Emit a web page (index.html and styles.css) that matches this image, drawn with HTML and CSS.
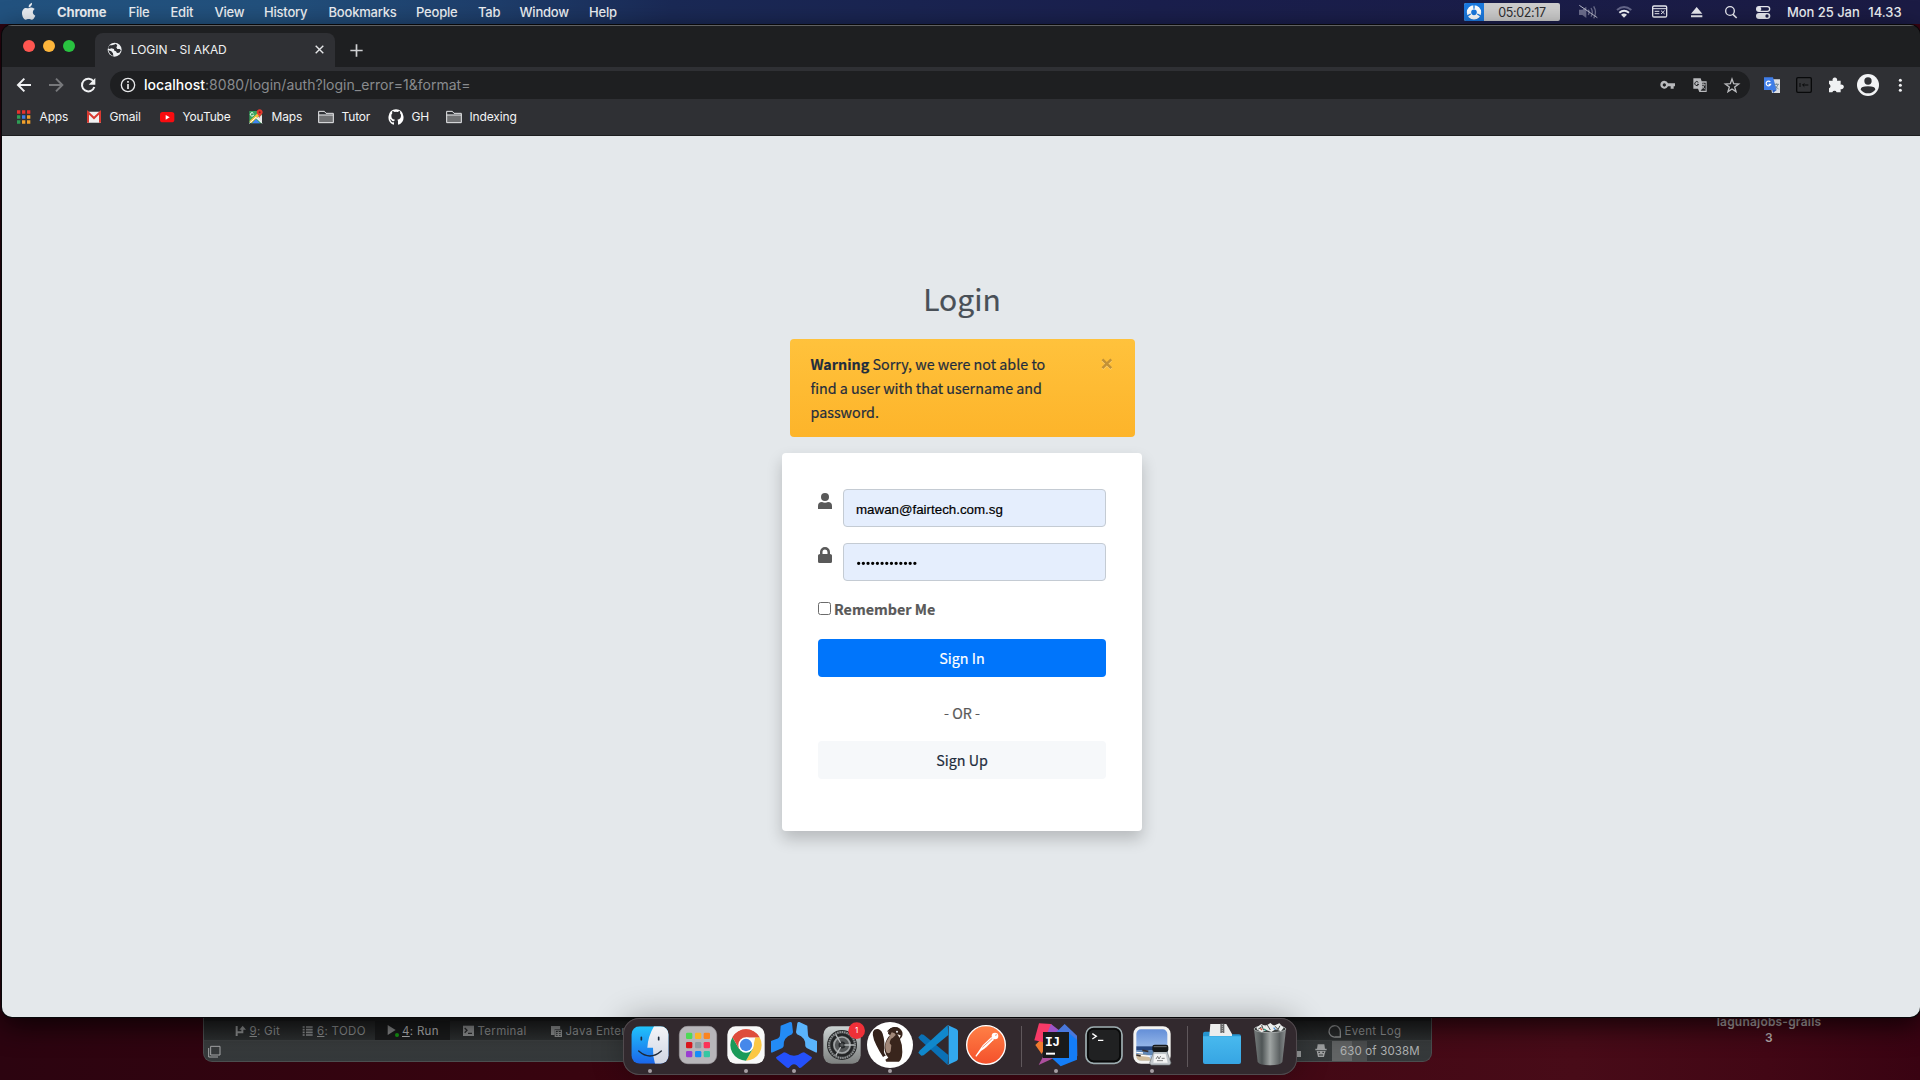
FILE: index.html
```html
<!DOCTYPE html>
<html lang="en">
<head>
<meta charset="utf-8">
<title>LOGIN - SI AKAD</title>
<link rel="stylesheet" href="styles.css">
</head>
<body>
<div class="desktop">

  <header class="menubar">
    <svg class="apple" viewBox="60 0 50 72"><path fill="#e9edf2" d="M86 22c-1-7 4-12 10-14 1 7-4 13-10 14zM85 25c4 0 6-3 11-2 3 0 6 2 8 4-8 6-7 16 2 20-3 7-7 12-11 12-3 0-5-2-9-2s-6 2-9 2c-6 0-11-11-11-19 0-10 6-16 12-16 3 0 5 1 7 1z"/></svg>
    <nav class="menus">
      <b>Chrome</b><span>File</span><span>Edit</span><span>View</span><span>History</span><span>Bookmarks</span><span>People</span><span>Tab</span><span>Window</span><span>Help</span>
    </nav>
    <div class="status">
      <div class="timer">
        <svg viewBox="192 9 60 54"><rect x="192" y="9" width="60" height="54" fill="#1b7ae0"/><circle cx="222" cy="37" r="15" fill="none" stroke="#fff" stroke-width="13"/><path stroke="#1b7ae0" stroke-width="4" d="M222 12v14M200 49l12-7M244 49l-12-7"/></svg>
        <span>05:02:17</span>
      </div>
      <svg class="tray" viewBox="480 0 681 72">
        <g fill="none" stroke="#6c6d8c" stroke-width="4"><path fill="#6c6d8c" stroke="none" d="M537 29h10l12-9v34l-12-9h-10z"/><path d="M565 29q5 8 0 16M573 24q8 13 0 26M581 19q11 18 0 36"/><path stroke="#b9bacb" stroke-width="3" d="M538 16l54 37"/></g>
        <g fill="none" stroke-width="6"><path stroke="#65678a" d="M651 30q21-18 43 0"/><path stroke="#eef0f5" d="M658 38q14-12 29 0"/><path fill="#eef0f5" stroke="none" d="M663 44q9-7 18 0l-9 9z"/></g>
        <g fill="none" stroke="#e8e9f0" stroke-width="4"><rect x="758" y="18" width="42" height="33" rx="4"/><path stroke-width="3" d="M759 26h40M764 34h14M764 41h14M783 32l11 10m0-10l-11 10"/></g>
        <path fill="#e8e9f0" d="M873 41l17-20 17 20zM873 46h34v6h-34z"/>
        <g fill="none" stroke="#e8e9f0" stroke-width="4"><circle cx="990" cy="33" r="13"/><path stroke-width="5" d="M999 43l11 11"/></g>
        <rect x="1070" y="20" width="39" height="14" rx="7" fill="none" stroke="#e8e9f0" stroke-width="4"/><circle cx="1077" cy="27" r="7" fill="#e8e9f0"/><rect x="1068" y="39" width="43" height="18" rx="9" fill="#e8e9f0"/><circle cx="1101" cy="48" r="5" fill="#1b1d47"/>
      </svg>
      <time><span>Mon 25 Jan</span><span>14.33</span></time>
    </div>
  </header>

  <div class="file-label">lagunajobs-grails<br>3</div>

  <section class="ide">
    <div class="ide-tools">
      <span class="t-git"><svg viewBox="133 76 33 36"><path fill="none" stroke="#8b8d8e" stroke-width="6" d="M138 79v30M140 98h15V88"/><path fill="#8b8d8e" d="M146 90l10-12 10 12z"/></svg><i><u>9</u>: Git</i></span>
      <span class="t-todo"><svg viewBox="337 76 33 36"><path stroke="#8b8d8e" stroke-width="5" d="M339 82h6M349 82h20M339 90h6M349 90h20M339 98h6M349 98h20M339 106h6M349 106h20"/></svg><i><u>6</u>: TODO</i></span>
      <span class="t-run"><svg viewBox="595 76 39 39"><path fill="#88898a" d="M597 79l24 15-24 15z"/><circle cx="625" cy="109" r="6" fill="#159a12"/></svg><i><u>4</u>: Run</i></span>
      <span class="t-term"><svg viewBox="819 76 33 36"><path fill="#8b8d8e" d="M819 78h33v31h-33z"/><path fill="none" stroke="#2b2d2e" stroke-width="4" d="M824 85l7 7-7 7M834 101h12"/></svg><i>Terminal</i></span>
      <span class="t-java"><svg viewBox="1083 76 36 39"><path fill="#8b8d8e" d="M1083 79h30v11h-18v19h-12z"/><path fill="none" stroke="#8b8d8e" stroke-width="4" d="M1097 93h20v20h-20zM1100 101h15M1100 107h15M1107 96v15"/></svg><i>Java Enterprise</i></span>
      <span class="t-log"><svg viewBox="84 43 39 42"><path fill="none" stroke="#8b8d8e" stroke-width="4" d="M121 82h-15a17 17 0 1 1 15-17z"/></svg><i>Event Log</i></span>
    </div>
    <div class="ide-status">
      <svg class="win-ico" viewBox="56 136 39 39"><path fill="none" stroke="#a6a8a9" stroke-width="3" d="M64 140h28v26H64zM58 145v27h28"/></svg>
      <b class="mini"></b>
      <svg class="hat" viewBox="45 104 36 42"><path fill="#a0a2a3" d="M53 105h20l2 13h5v5H46v-5h5zM50 125h27l-3 9-2 9H54l-2-9z"/><path stroke="#333637" stroke-width="3" d="M55 129h5M67 129h5M57 137h12"/></svg>
      <span class="mem">630 of 3038M</span>
    </div>
  </section>

  <main class="browser">
    <div class="tabstrip">
      <div class="lights"><i class="red"></i><i class="amber"></i><i class="green"></i></div>
      <div class="tab">
        <svg class="globe" viewBox="322 127 46 46"><circle cx="345" cy="150" r="21" fill="#eef0f2"/><path fill="#2f3034" d="M337 137q9-3 12-5l4 6-3 5 3 5 7 0 4 4-5 7-7 1-3-5-5-2-1-5-8-2-5 2-5-2q2-7 6-9zM326 152l9 3 5 6 1 8q-11-3-15-17z"/></svg>
        <span>LOGIN - SI AKAD</span>
        <svg class="x" viewBox="944 137 26 26"><path stroke="#e6e7e9" stroke-width="4" d="M946 139l22 22m0-22l-22 22"/></svg>
      </div>
      <svg class="plus" viewBox="2 131 38 38"><path stroke="#cfd0d2" stroke-width="5" d="M3 150h36M21 132v36"/></svg>
    </div>
    <div class="toolbar">
      <svg class="nav-btns" viewBox="6 201 324 108"><g fill="none" stroke="#f0f1f3" stroke-width="6"><path d="M93 255H54M73 236l-19 19 19 19"/><path stroke="#77787b" d="M147 255h39M168 236l19 19-19 19"/><path d="M281 245a19 19 0 1 0 2 16"/></g><path fill="#f0f1f3" d="M286 234v20h-20z"/></svg>
      <div class="omnibox">
        <svg class="info" viewBox="360 231 48 48"><g fill="none" stroke="#e6e7e9" stroke-width="4"><circle cx="384" cy="255" r="20"/><path stroke-width="5" d="M384 243v5M384 252v15"/></g></svg>
        <span class="url"><b>localhost</b>:8080/login/auth?login_error=1&amp;format=</span>
        <svg class="omni-actions" viewBox="774 213 276 84"><g fill="#b9babd"><path fill-rule="evenodd" d="M793 242a12 12 0 0 1 11 8h21v9h-4v7h-9v-7h-8a12 12 0 1 1-11-17zm0 8a5 5 0 1 0 .1 0z"/><path d="M880 235h22l3 9h15v32h-22l-4-10h-14z"/></g><path fill="#1f2023" d="M907 248h10v24h-15l5-8z"/><path fill="none" stroke="#1f2023" stroke-width="3" d="M895 247a6 6 0 1 0 1 6h-5"/><path fill="none" stroke="#b9babd" stroke-width="2.500" d="M902 253h14M910 250v4M905 268l9-14M905 257l10 11"/><path fill="none" stroke="#b9babd" stroke-width="4" d="M996 237l5 14 15 1-12 9 4 14-12-8-12 8 4-14-12-9 15-1z"/></svg>
      </div>
      <svg class="ext" viewBox="1050 201 504 108">
        <path fill="#dedfe2" d="M1108 238h32v41h-24z"/><path fill="#3f7de8" d="M1092 232h27l11 38h-38z"/><path fill="#2b5fc4" d="M1117 270h13l-11 9z"/><path fill="none" stroke="#fff" stroke-width="3.500" d="M1111 246a7 7 0 1 0 1 7h-6"/><path fill="none" stroke="#6a7f91" stroke-width="2.500" d="M1122 253h15M1130 250v4M1126 268l8-14M1126 258l10 10"/>
        <rect x="1190" y="233" width="44" height="44" rx="4" fill="#333437" stroke="#08090a" stroke-width="4"/><path fill="none" stroke="#08090a" stroke-width="3" d="M1200 249v12M1208 255h17M1213 250l-5 5 5 5"/>
        <path fill="#f0f1f3" d="M1287 242h11a7 7 0 1 1 13 0h11v12a7 7 0 1 1 0 13v10h-12a7 7 0 0 0-13 0h-10v-12a7 7 0 0 0 0-13z"/>
        <circle cx="1404" cy="255" r="33" fill="#f2f3f5"/><circle cx="1404" cy="243" r="11" fill="#2f3034"/><path fill="#2f3034" d="M1382 269q0-10 22-10t22 10q-9 11-22 11t-22-11z"/>
        <g fill="#f0f1f3"><circle cx="1501" cy="241" r="4.500"/><circle cx="1501" cy="256" r="4.500"/><circle cx="1501" cy="271" r="4.500"/></g>
      </svg>
    </div>
    <div class="bookmarks">
      <span><svg viewBox="48 326 48 48"><path fill="#e8322d" d="M51 330h10v10H51zM66 330h10v10H66zM81 330h10v10H81z"/><path fill="#2f9e55" d="M51 345h10v10H51zM51 360h10v10H51z"/><path fill="#3f7de8" d="M66 345h10v10H66z"/><path fill="#f2a02c" d="M81 345h10v10H81zM66 360h10v10H66zM81 360h10v10H81z"/></svg>Apps</span>
      <span><svg viewBox="258 326 48 48"><path fill="#f1f1f1" d="M261 334h42v33h-42z"/><path fill="none" stroke="#d93a31" stroke-width="6" d="M264 367v-31l18 17 18-17v31"/></svg>Gmail</span>
      <span><svg viewBox="477 326 48 48"><rect x="480" y="335" width="43" height="31" rx="8" fill="#f80c10"/><path fill="#fff" d="M497 344l12 7-12 7z"/></svg>YouTube</span>
      <span><svg viewBox="744 326 48 48"><path fill="#37a35d" d="M748 332h38v37h-38z"/><path fill="#f5c23c" d="M748 363l32-32 6 7-32 31z"/><path fill="#4285f4" d="M756 369l12-13 12 13z"/><path fill="#e5e5e5" d="M768 354l18-10v25z"/><path fill="none" stroke="#fff" stroke-width="3" d="M760 339a5 5 0 1 0 1 4M748 369l20-18 18 18"/><path fill="#e2392e" d="M779 354q-1-8-5-11a9 9 0 1 1 10 0q-4 3-5 11z"/><circle cx="779" cy="336" r="3" fill="#8b1d18"/></svg>Maps</span>
      <span><svg viewBox="954 326 48 48"><path fill="#707173" d="M956 343h44v24h-44z"/><path fill="none" stroke="#e9eaec" stroke-width="3" d="M956 367v-34h17l5 6h22v28zM956 344h44"/></svg>Tutor</span>
      <span><svg viewBox="114 326 48 48"><path fill="#fff" d="M138 327a24 24 0 0 0-8 46q2 0 2-2v-5c-7 1-8-2-9-4-1-3-5-4-2-5 3 0 4 4 6 5q3 1 6 0 0-3 2-4c-8-1-11-5-11-12q0-4 3-7-1-3 0-7 3 0 7 3 4-1 9 0 4-3 7-3 1 4 0 7 3 3 3 7c0 7-4 11-11 12q2 2 2 5v8q0 2 2 2a24 24 0 0 0-8-46z"/></svg>GH</span>
      <span><svg viewBox="954 326 48 48"><path fill="#707173" d="M956 343h44v24h-44z"/><path fill="none" stroke="#e9eaec" stroke-width="3" d="M956 367v-34h17l5 6h22v28zM956 344h44"/></svg>Indexing</span>
    </div>
    <div class="page">
      <h1>Login</h1>
      <div class="alert">
        <p><strong>Warning</strong> Sorry, we were not able to find a user with that username and password.</p>
        <svg viewBox="995 265 34 34"><path stroke="#fff" stroke-opacity=".35" stroke-width="7" d="M999 271l25 25m0-25l-25 25"/><path stroke="#c29136" stroke-width="7" d="M999 269l25 25m0-25l-25 25"/></svg>
      </div>
      <form class="card">
        <div class="field">
          <svg viewBox="0 0 14 16"><circle cx="7" cy="4" r="4"/><path d="M0 16v-3q0-4 4-4 3 1.500 6 0 4 0 4 4v3z"/></svg>
          <div class="input">mawan@fairtech.com.sg</div>
        </div>
        <div class="field">
          <svg viewBox="0 0 14 16"><path fill-rule="evenodd" d="M2 7V5a5 5 0 0 1 10 0v2q2 0 2 1.500v6Q14 16 12.500 16h-11Q0 16 0 14.500v-6Q0 7 2 7zm2.500 0h5V5a2.500 2.500 0 0 0-5 0z"/></svg>
          <div class="input dots"><svg viewBox="260 30 180 20"><path fill="none" stroke="#000" stroke-width="10" stroke-linecap="round" stroke-dasharray="0 14.050" d="M265 40h170"/></svg></div>
        </div>
        <label class="remember"><i></i>Remember Me</label>
        <div class="btn primary">Sign In</div>
        <div class="or">- OR -</div>
        <div class="btn light">Sign Up</div>
      </form>
    </div>
  </main>

  <footer class="dock">
    <svg viewBox="48 39 144 171">
      <defs>
        <linearGradient id="blueFace" x2="0" y2="1"><stop stop-color="#20c3fb"/><stop offset="1" stop-color="#1b66ea"/></linearGradient>
        <linearGradient id="paleFace" x2="0" y2="1"><stop stop-color="#f4f5f8"/><stop offset="1" stop-color="#cfd6e4"/></linearGradient>
        <clipPath id="tile"><rect x="64" y="64" width="112" height="112" rx="25"/></clipPath>
      </defs>
      <g clip-path="url(#tile)"><path fill="url(#blueFace)" d="M64 64h112v112H64z"/><path fill="url(#paleFace)" d="M132 64q-18 30-20 64h17q-1 25 6 48h41V64z"/></g>
      <path fill="none" stroke="#1d2938" stroke-width="5" stroke-linecap="round" d="M94 97v7M146 97v7"/><path fill="none" stroke="#1d2938" stroke-width="4" stroke-linecap="round" d="M86 138q34 30 68 0"/>
      <circle class="running" cx="120" cy="198" r="6"/>
    </svg>
    <svg viewBox="192 39 144 171">
      <rect x="208" y="64" width="112" height="112" rx="25" fill="#b8b6ba" stroke="#a19ea3" stroke-width="2"/>
      <g><rect x="228" y="83" width="19" height="19" rx="4" fill="#4fd956"/><rect x="255" y="83" width="19" height="19" rx="4" fill="#fdb527"/><rect x="281" y="83" width="19" height="19" rx="4" fill="#fb8420"/><rect x="228" y="111" width="19" height="19" rx="4" fill="#d8161c"/><rect x="255" y="111" width="19" height="19" rx="4" fill="#8f9ba2"/><rect x="281" y="111" width="19" height="19" rx="4" fill="#fb3358"/><rect x="228" y="138" width="19" height="19" rx="4" fill="#9a3fd0"/><rect x="255" y="138" width="19" height="19" rx="4" fill="#168df8"/><rect x="281" y="138" width="19" height="19" rx="4" fill="#35c7a2"/></g>
    </svg>
    <svg viewBox="336 39 144 171">
      <rect x="352" y="64" width="112" height="112" rx="25" fill="#f8f8f8"/>
      <path fill="#de4c3c" d="M408 120L367.300 96.500A47 47 0 0 1 448.700 96.500H408z"/><path fill="#fbc744" d="M448.700 96.500A47 47 0 0 1 408 167l20-35 8-35.500z"/><path fill="#1b9a59" d="M367.300 96.500A47 47 0 0 0 408 167l20.500-35.500L408 120l-20.500 12z"/><path fill="#de4c3c" d="M408 96.500h40.700A47 47 0 0 0 367.300 96.500l20.300 35.300z"/><circle cx="408" cy="120" r="23" fill="#fff"/><circle cx="408" cy="120" r="18.500" fill="#4688ea"/>
      <circle class="running" cx="408" cy="198" r="6"/>
    </svg>
    <svg viewBox="480 39 144 171">
      <path fill="#238bf5" d="M512 62l28-11q5-1 6 4l3 27-3 6q-28 10-25 36l-4 5-32 14-2-2V108l16-6q10-3 11-12z"/><path fill="#5ab4fc" d="M592 62l-24-11q-5-1-6 4l-4 27 3 6q28 10 25 36l4 5 29 14 2-2V108l-14-6q-12-3-13-12z"/><path fill="#2450fa" d="M498 157l24-15 6 1q24 18 48 0l6-1 24 15-2 5-31 26-5 1-8-8q-8-6-16 0l-8 8-5-1-31-26z"/>
      <circle class="running" cx="552" cy="198" r="6"/>
    </svg>
    <svg viewBox="624 39 144 171">
      <defs><linearGradient id="metal" x2="0" y2="1"><stop stop-color="#cbd2d2"/><stop offset="1" stop-color="#7d807f"/></linearGradient></defs>
      <rect x="640" y="64" width="112" height="112" rx="25" fill="url(#metal)"/><g fill="none"><circle cx="696" cy="120" r="43" fill="#4b4d4e" stroke="#292b2c" stroke-width="4"/><circle cx="696" cy="120" r="39" stroke="#8f9394" stroke-width="6" stroke-dasharray="4 3"/><circle cx="696" cy="120" r="31" stroke="#232526" stroke-width="7"/><circle cx="696" cy="120" r="24" fill="#555859" stroke="#a0a4a5" stroke-width="5"/><circle cx="696" cy="120" r="8" stroke="#25282a" stroke-width="5"/><path stroke="#b7babb" stroke-width="4" d="M703 120h30M692 126l-15 26M692 114l-15-26"/></g>
      <circle cx="740" cy="77" r="25" fill="#ef3038"/><text x="740" y="85" class="badge">1</text>
    </svg>
    <svg viewBox="768 39 144 171">
      <circle cx="840" cy="120" r="69" fill="#fff"/><path fill="#33211a" d="M793 74q17-7 25 12 8 25 4 49-1 12 6 16l-9 5q-13-20-20-35-18-37-6-47z"/><path fill="#39251c" d="M834 86q-1-16 18-19 18-3 25 14 3 13-7 21 8 18 7 39-1 24-10 29h-38l-3-6 9-6q-16-19-10-39 4-18 15-28z"/><path fill="#a28878" d="M845 82q11 2 12 8l-9 9q-8 2-9 16l5 6-2 18q-4 10-13 3-9-24 7-43z"/><path fill="#f5eee5" d="M862 88l10 3-3 8z"/><circle cx="861" cy="80" r="3" fill="#eee"/><path fill="none" stroke="#2b1b15" stroke-width="3" d="M832 79q16-17 33-9"/>
      <circle class="running" cx="840" cy="198" r="6"/>
    </svg>
    <svg viewBox="912 39 144 171">
      <path fill="#0a70b5" d="M925 97l9-9 7 1 74 61-2 30-83-76z"/><path fill="#1088cc" d="M925 143l9 9 7-1 74-61-2-30-83 76z"/><path fill="#32a8ee" d="M1013 60l26 12q5 3 5 7v82q0 4-5 7l-26 12q5-4 3-10V70q2-6-3-10z"/>
    </svg>
    <svg viewBox="36 39 144 171">
      <defs><linearGradient id="orange" x2="0" y2="1"><stop stop-color="#ff8046"/><stop offset="1" stop-color="#f4502b"/></linearGradient></defs>
      <circle cx="108" cy="120" r="58" fill="url(#orange)" stroke="#fff" stroke-width="4"/><path fill="#fff" d="M76 153l22-32 26-25 8 8-22 23-17 11-14 17z"/><circle cx="135" cy="93" r="10" fill="#fff"/><path fill="none" stroke="#f26438" stroke-width="2" d="M97 127l29-26M104 132l25-24M135 91l6-2"/>
    </svg>
    <i class="sep"></i>
    <svg viewBox="246 39 144 171">
      <path fill="#ef7a2f" d="M256 120l15-15 18 15-14 27z"/><path fill="#ad4f9e" d="M283 148l-17 32 44-20z"/><path fill="#f73a67" d="M267 55l36 2 20 30-44 24-26-5z"/><path fill="#9c55c8" d="M303 57l28 22-4 32-38-20z"/><path fill="#4978dc" d="M344 57l37 35 1 62-46-60-20-10z"/><path fill="#147df7" d="M356 84l25 20v60l-49 20-26-24z"/><path fill="#191a1b" d="M279 81h78v78h-78z"/><path fill="#fff" d="M288 143h27v6h-27z"/><text x="285" y="123" class="ij">IJ</text>
      <circle class="running" cx="318" cy="198" r="6"/>
    </svg>
    <svg viewBox="390 39 144 171">
      <rect x="408" y="66" width="108" height="109" rx="23" fill="#1c1d1e" stroke="#9eaeb1" stroke-width="5"/><rect x="414" y="72" width="96" height="97" rx="17" fill="#202122" stroke="#080909" stroke-width="5"/><path fill="none" stroke="#fff" stroke-width="4" d="M427 86l12 8-12 8M444 106h16"/>
    </svg>
    <svg viewBox="534 39 144 171">
      <defs><linearGradient id="sky" x2="0" y2="1"><stop stop-color="#648fd8"/><stop offset="1" stop-color="#bbd5f5"/></linearGradient></defs>
      <rect x="550" y="64" width="112" height="112" rx="23" fill="#f4f4f2"/><rect x="559" y="73" width="93" height="94" rx="14" fill="url(#sky)"/><path fill="#25457e" d="M559 124h93v12h-93z"/><path fill="#5f87b5" d="M559 136h93v14h-93z"/><path fill="#d0bc9b" d="M559 147l30 2 20 18h-35q-13 0-15-12z"/><path stroke="#fff" stroke-width="4" d="M559 142l20 2M572 151l28 3"/><path stroke="#382f2d" stroke-width="5" d="M577 136l18 3M559 150l13 3"/>
      <path fill="#c1c7cb" stroke="#6f7679" stroke-width="2" d="M611 140h40l12 34-4 6h-56l-4-6z"/><rect x="607" y="119" width="48" height="22" rx="7" fill="#161819"/><path stroke="#6b6f70" stroke-width="3" d="M611 125h39"/><path fill="#f3f4f4" d="M613 147h34l6 26h-43z"/><path fill="none" stroke="#444" stroke-width="2" d="M618 162l5-8 4 8 5-9M635 160h9M621 167h18"/>
      <circle class="running" cx="606" cy="198" r="6"/>
    </svg>
    <i class="sep"></i>
    <svg viewBox="744 39 144 171">
      <defs><linearGradient id="folder" x2="0" y2="1"><stop stop-color="#48b9ee"/><stop offset="1" stop-color="#36a5e3"/></linearGradient></defs>
      <path fill="#2594cf" d="M759 86q0-6 6-6h23l9 8h70q6 0 6 6v30H759z"/><path fill="#eceded" d="M781 57h48l17 30v6h-68z"/><path fill="#69696a" d="M811 56h12v28h-12z"/><path stroke="#ddd" stroke-width="2" stroke-dasharray="3 3" d="M817 57v27"/><path fill="url(#folder)" d="M759 94h114v77q0 6-6 6H765q-6 0-6-6z"/>
    </svg>
    <svg viewBox="888 39 144 171">
      <defs><linearGradient id="bin"><stop stop-color="#777d7d"/><stop offset=".25" stop-color="#4f5556"/><stop offset=".5" stop-color="#a0a5a4"/><stop offset=".8" stop-color="#5c6162"/><stop offset="1" stop-color="#8b8f8f"/></linearGradient></defs>
      <path fill="url(#bin)" d="M912 72h96l-11 99q-6 10-37 10t-37-10z"/><ellipse cx="960" cy="72" rx="48" ry="11" fill="#3c4040" stroke="#a3a7a7" stroke-width="3"/><path fill="#eceeed" d="M919 68l15-11 12 7 15-10 10 8 17-7 13 13-8 11-16-6-13 8-15-6-14 7-13-8z"/><path fill="none" stroke="#4b4d4d" stroke-width="3" d="M935 60l6 16M952 60l9 15M974 63l10 10M990 62l-7 14M925 72l10-6"/><path stroke="#e35131" stroke-width="4" d="M931 70l5 5"/><path stroke="#2ca087" stroke-width="4" d="M942 72l6 4"/><path stroke="#4593e4" stroke-width="4" d="M971 68l5 6"/>
    </svg>
  </footer>
</div>
</body>
</html>
```
FILE: styles.css
```css
* { box-sizing: border-box; }
body { margin: 0; }
svg { display: block; flex: none; }

.desktop {
  position: relative;
  width: 1920px;
  height: 1080px;
  overflow: hidden;
  background: linear-gradient(90deg, #2c0410 0, #38040f 30%, #400713 60%, #480b18 82%, #420715 92%, #390312 100%);
  font-family: Inter, "Liberation Sans", sans-serif;
}

/* menu bar */
.menubar {
  display: flex;
  align-items: center;
  height: 24px;
  padding-left: 20px;
  color: #eef1f5;
  font-size: 13px;
  font-weight: 500;
  background: linear-gradient(90deg, #22527f 0, #22507c 14%, #1e3d6a 26%, #1a2955 35%, #1a1f4d 60%, #1b1b44 100%);
}
.apple { width: 16.700px; height: 24px; }
.menus {
  display: grid;
  grid-template-columns: 71.500px 42px 44px 49.500px 64.500px 87.500px 62px 41.500px 69.500px 40px;
  margin-left: 20.300px;
  line-height: 24px;
  letter-spacing: -0.2px;
}
.menus b { font-weight: 700; letter-spacing: -0.15px; }
.status { display: flex; align-items: center; margin-left: auto; width: 456px; }
.timer {
  display: flex;
  width: 96px;
  height: 18px;
  border-radius: 2px;
  overflow: hidden;
  background: #cdcdcd;
  color: #2e2e30;
  line-height: 19px;
  font-weight: 400;
  font-size: 12.500px;
}
.timer svg { width: 20px; height: 18px; }
.timer span { width: 76px; text-align: center; letter-spacing: -0.35px; }
.tray { width: 227px; height: 24px; }
.status time { display: flex; width: 133px; justify-content: space-between; padding-right: 18.500px; letter-spacing: -0.05px; }

/* desktop item */
.file-label {
  position: absolute;
  left: 1689px;
  top: 1014px;
  width: 160px;
  text-align: center;
  font-size: 12px;
  line-height: 16px;
  font-weight: 600;
  letter-spacing: 0.2px;
  color: #b3abad;
}

/* background editor window */
.ide {
  position: absolute;
  left: 203px;
  top: 990px;
  width: 1229px;
  height: 72px;
  padding-top: 31px;
  border-radius: 0 0 9px 9px;
  background: linear-gradient(#1c1d1e 42%, #2a2d2e 70%, #383b3c 72%, #34383a);
  border: 1px solid #4b4e4f;
  border-top: 0;
  color: #8b8d8e;
  font-size: 11.500px;
  overflow: hidden;
}
.ide i { font-style: normal; }
.ide-tools {
  display: grid;
  grid-template-columns: 67.500px 73px 75px 12.500px 88px 777px 100px;
  height: 20px;
  padding-left: 30.500px;
  background: linear-gradient(#232425, #2b2e2f);
  border-bottom: 1px solid #3c3f40;
}
.ide-tools span { display: flex; align-items: center; letter-spacing: 0.3px; white-space: nowrap; }
.ide-tools svg { width: 11px; height: 12px; margin-right: 4px; }
.ide-tools .t-run { background: #1a1b1c; color: #b4b5b6; padding-left: 12px; }
.ide-tools .t-run svg { width: 13px; height: 13px; margin-right: 2px; }
.ide-tools .t-term { grid-column: 5; }
.ide-tools .t-log svg { width: 13px; height: 14px; }
.ide-status { display: flex; align-items: center; height: 20px; padding-left: 4px; color: #b1b3b4; }
.win-ico { width: 13px; height: 13px; }
.mini { width: 4px; height: 6px; margin: 5px 14px 0 1076px; background: #9a9c9d; }
.hat { width: 12px; height: 14px; margin-right: 5px; }
.mem {
  height: 20px;
  line-height: 20px;
  padding-left: 8px;
  white-space: nowrap;
  letter-spacing: 0.15px;
  background: linear-gradient(90deg, #626465 20px, #4c4e4f 20px, #4c4e4f 35px, transparent 35px);
}

/* browser window */
.browser {
  position: absolute;
  left: 2px;
  top: 25px;
  width: 1918px;
  height: 992px;
  display: flex;
  flex-direction: column;
  border-radius: 10px;
  overflow: hidden;
  background: #1e1f21;
  box-shadow: 0 0 0 1px #08080a, 0 8px 28px rgba(0, 0, 0, .75);
}
.tabstrip { display: flex; height: 42px; border-top: 1px solid #5f6062; background: #1e1f21; }
.lights { display: flex; gap: 8px; width: 93px; padding: 14px 0 0 21px; }
.lights i { width: 12px; height: 12px; border-radius: 50%; }
.red { background: #fe5650; }
.amber { background: #fdb53b; }
.green { background: #29c240; }
.tab {
  display: flex;
  align-items: center;
  width: 240px;
  margin-top: 7px;
  padding: 0 11px 1px 12px;
  border-radius: 8px 8px 0 0;
  background: #2f3034;
  color: #f0f1f2;
  font-size: 12px;
}
.globe { width: 15.300px; height: 15.300px; margin-right: 8.500px; }
.tab span { letter-spacing: -0.05px; }
.x { width: 9px; height: 9px; margin-left: auto; }
.plus { width: 13px; height: 13px; margin: 17.500px 0 0 15px; }
.toolbar { display: flex; align-items: center; height: 36px; background: #2f3034; }
.nav-btns { width: 108px; height: 36px; }
.omnibox {
  display: flex;
  align-items: center;
  width: 1640px;
  height: 28px;
  padding-left: 10px;
  border-radius: 14px;
  background: #1e1f21;
}
.info { width: 16px; height: 16px; }
.url { margin-left: 8px; color: #898b8e; font-size: 14px; line-height: 28px; letter-spacing: 0.02px; }
.url b { font-weight: 500; color: #fff; }
.omni-actions { width: 92px; height: 28px; margin-left: auto; }
.ext { width: 168px; height: 36px; }
.bookmarks {
  display: grid;
  grid-template-columns: 70px 73px 89px 70px 70px 58px 90px;
  align-items: center;
  height: 33px;
  padding: 0 0 5px 14px;
  background: #2f3034;
  border-bottom: 1px solid #1c1d1f;
  color: #f3f4f5;
  font-size: 12px;
}
.bookmarks span { display: flex; align-items: center; letter-spacing: -0.15px; }
.bookmarks svg { width: 16px; height: 16px; margin-right: 7.500px; }

/* login page */
.page {
  flex: 1;
  display: flex;
  flex-direction: column;
  align-items: center;
  padding: 141px 0 0 2px;
  background: #e4e8eb;
  color: #1f2d3d;
  font-family: "Noto Sans CJK SC", "Noto Sans", sans-serif;
  font-size: 14.300px;
  line-height: 24px;
  -webkit-text-stroke: 0.2px currentColor;
}
.page h1 { margin: 0; height: 62px; font-size: 30px; line-height: 42px; font-weight: 400; color: #495057; }
.alert {
  display: flex;
  justify-content: space-between;
  width: 345px;
  height: 98px;
  margin-bottom: 16px;
  padding: 13px 21.500px 0 21px;
  border-radius: 4px;
  background: linear-gradient(#ffc23c, #fdb42a);
}
.alert p { margin: 0; width: 242px; }
.alert svg { width: 12px; height: 12px; margin-top: 6px; }
.card {
  display: flex;
  flex-direction: column;
  width: 360px;
  height: 378px;
  padding: 36px;
  border-radius: 4px;
  background: #fff;
  color: #595959;
  box-shadow: 0 8px 16px rgba(0, 0, 0, .2);
}
.field { display: flex; justify-content: space-between; margin-bottom: 16px; }
.field > svg { width: 14px; height: 16px; margin-top: 4px; fill: #595959; }
.input {
  width: 263px;
  height: 38px;
  padding: 1px 12px 0;
  border: 1px solid #c4cbd3;
  border-radius: 4px;
  background: #e5eefd;
  color: #000;
  font: 13.333px/38px "Liberation Sans", Arial, sans-serif;
}
.dots { display: flex; align-items: center; padding: 2px 12px 0 12.500px; }
.dots svg { width: 60px; height: 6.700px; }
.remember { display: flex; height: 24px; margin: 0 0 18px; font-weight: 700; }
.remember i { width: 13px; height: 13px; margin: 5px 3px 0 0; border: 1px solid #6b6b6b; border-radius: 2.500px; }
.btn { height: 38px; border-radius: 4px; text-align: center; line-height: 38px; }
.primary { background: #0075fb; color: #fff; }
.or { margin: 24px 0 16px; text-align: center; }
.light { background: #f6f8fa; color: #1f2d3d; }

/* dock */
.dock {
  position: absolute;
  left: 623px;
  top: 1018px;
  width: 674px;
  height: 57px;
  display: flex;
  padding-left: 3px;
  border-radius: 16px;
  background: #32292e;
  box-shadow: inset 0 0 0 1px #514a4e, 0 0 32px rgba(0, 0, 0, .3);
}
.dock svg { width: 48px; height: 57px; }
.sep { width: 1px; height: 41px; margin: 8px 10px 0 11px; background: #5f575b; }
.running { fill: #a79fa4; }
.badge { fill: #fff; font-size: 24px; text-anchor: middle; }
.ij { fill: #fff; font: 700 39px "Liberation Mono", monospace; letter-spacing: -2px; }
```
